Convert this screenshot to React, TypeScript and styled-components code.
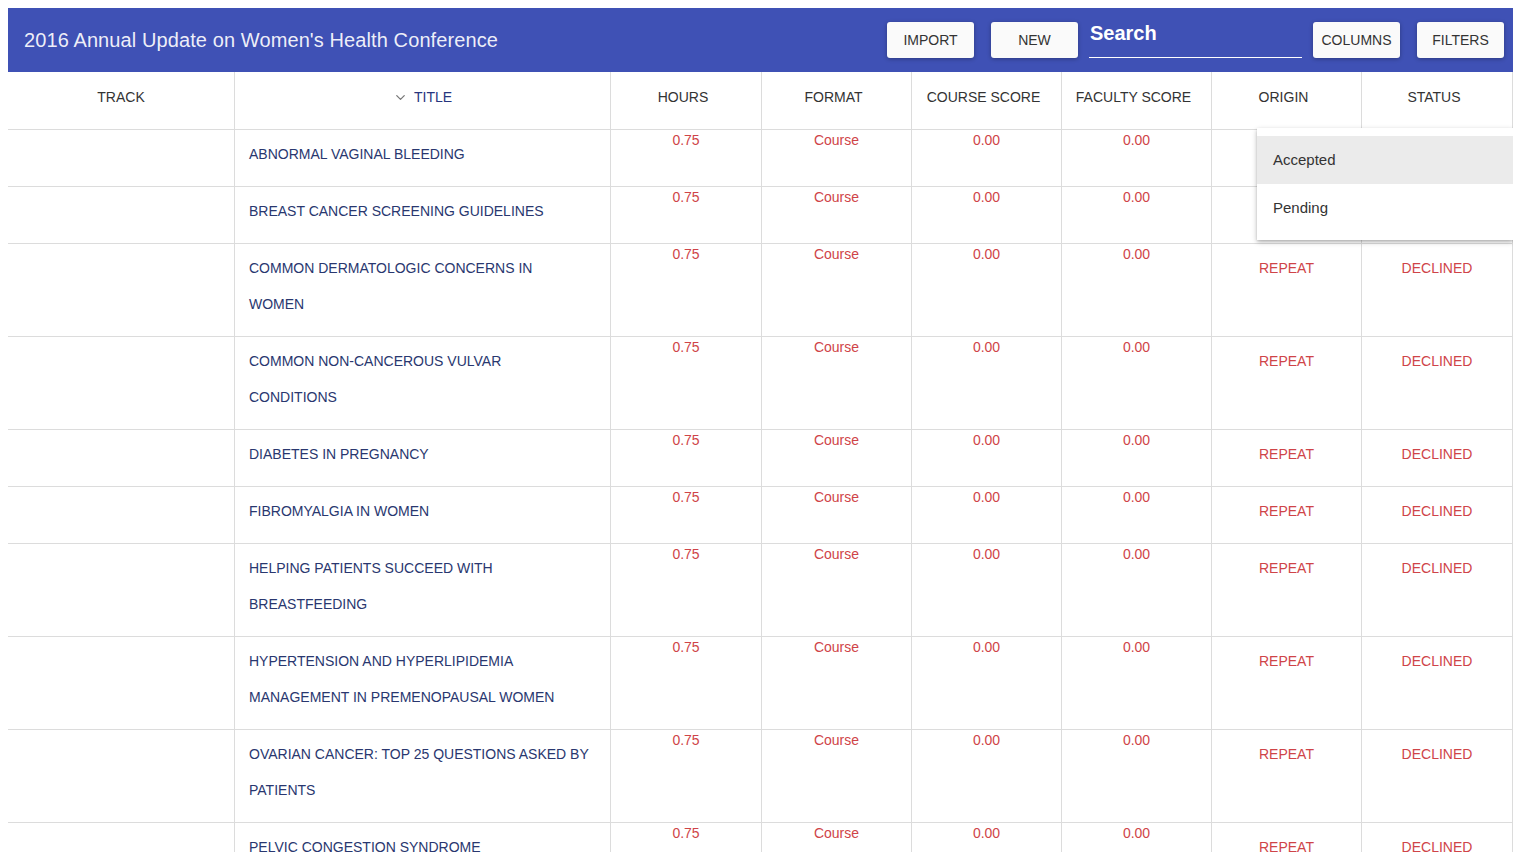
import React from "react";
import styled, { createGlobalStyle } from "styled-components";
import { ChevronDown } from "lucide-react";

const Global = createGlobalStyle`
  body { margin: 8px; font-family: "Liberation Sans", Arial, sans-serif; background: #fff; }
  * { box-sizing: border-box; }
`;

const Page = styled.div`
  height: 844px;
  overflow: hidden;
  position: relative;
`;

const Toolbar = styled.div`
  height: 64px;
  background: #3f51b5;
  display: flex;
  align-items: center;
  padding: 0 9px 0 16px;
  position: relative;
  z-index: 2;
`;

const Heading = styled.div`
  flex: 1;
  color: rgba(255, 255, 255, 0.92);
  font-size: 20px;
  letter-spacing: 0.1px;
`;

const Actions = styled.div`
  display: flex;
  align-items: center;
  gap: 17px;
`;

const Group = styled.div`
  display: flex;
  align-items: center;
  gap: 11px;
`;

const Button = styled.button`
  width: 87px;
  height: 36px;
  border: none;
  border-radius: 3px;
  background: #fafafa;
  color: #333;
  font-family: "Liberation Sans", Arial, sans-serif;
  font-size: 14px;
  text-transform: uppercase;
  box-shadow: 0 1px 4px rgba(0, 0, 0, 0.3);
  margin-bottom: 1px;
`;

const SearchBox = styled.div`
  width: 213px;
  height: 43px;
  border-bottom: 1px solid #fff;
  margin-top: -7px;
  display: flex;
  align-items: flex-start;
  padding-left: 1px;
`;

const SearchLabel = styled.span`
  color: #fff;
  font-weight: bold;
  font-size: 20px;
  line-height: 36px;
`;

const Card = styled.div`
  box-shadow: 0 1px 6px rgba(0, 0, 0, 0.18), 0 1px 3px rgba(0, 0, 0, 0.12);
  background: #fff;
  position: relative;
`;

const cols = "227px 376px 151px 150px 150px 150px 150px 151px";

const Row = styled.div`
  display: grid;
  grid-template-columns: ${cols};
  border-bottom: 1px solid #dcdcdc;
`;

const HeadCell = styled.div<{ $active?: boolean; $sortable?: boolean }>`
  height: 57px;
  border-right: 1px solid #dcdcdc;
  display: flex;
  align-items: center;
  justify-content: center;
  gap: 6px;
  font-size: 14px;
  color: ${(p) => (p.$active ? "#27357e" : "#333")};
  padding-bottom: 7px;
  padding-right: ${(p) => (p.$sortable ? "6px" : "0")};
`;

const Cell = styled.div`
  border-right: 1px solid #dcdcdc;
  font-size: 14px;
`;

const TitleCell = styled(Cell)`
  padding: 6px 12px 14px 14px;
  line-height: 36px;
  color: #29376f;
  text-transform: uppercase;
`;

const NumCell = styled(Cell)`
  padding-top: 2px;
  line-height: 16px;
  text-align: center;
  color: #cf4448;
`;

const TagCell = styled(Cell)`
  padding-top: 6px;
  line-height: 36px;
  text-align: center;
  color: #cf4448;
`;

const Menu = styled.div`
  position: absolute;
  top: 56px;
  right: 0;
  width: 256px;
  padding: 8px 0;
  background: #fff;
  box-shadow: 0 2px 5px rgba(0, 0, 0, 0.28), 0 1px 2px rgba(0, 0, 0, 0.1);
  z-index: 3;
`;

const MenuItem = styled.div<{ $hover?: boolean }>`
  height: 48px;
  line-height: 48px;
  padding-left: 16px;
  font-size: 15px;
  color: #333;
  background: ${(p) => (p.$hover ? "#ebebeb" : "transparent")};
`;

const headers = ["Track", "Title", "Hours", "Format", "Course Score", "Faculty Score", "Origin", "Status"];

const titles = [
  ["Abnormal Vaginal Bleeding"],
  ["Breast Cancer Screening Guidelines"],
  ["Common Dermatologic Concerns in", "Women"],
  ["Common Non-Cancerous Vulvar", "Conditions"],
  ["Diabetes in Pregnancy"],
  ["Fibromyalgia in Women"],
  ["Helping Patients Succeed with", "Breastfeeding"],
  ["Hypertension and Hyperlipidemia", "Management in Premenopausal Women"],
  ["Ovarian Cancer: Top 25 Questions Asked by", "Patients"],
  ["Pelvic Congestion Syndrome"],
];

export default function App() {
  return (
    <Page>
      <Global />
      <Toolbar>
        <Heading>2016 Annual Update on Women's Health Conference</Heading>
        <Actions>
          <Button>Import</Button>
          <Group>
            <Button>New</Button>
            <SearchBox>
              <SearchLabel>Search</SearchLabel>
            </SearchBox>
            <Button>Columns</Button>
          </Group>
          <Button>Filters</Button>
        </Actions>
      </Toolbar>
      <Card>
        <Row>
          {headers.map((h, i) => (
            <HeadCell key={h} $active={h === "Title"} $sortable={i > 1}>
              {h === "Title" && <ChevronDown size={15} color="#777" strokeWidth={2} />}
              {h.toUpperCase()}
            </HeadCell>
          ))}
        </Row>
        {titles.map((t, i) => (
          <Row key={i}>
            <Cell />
            <TitleCell>
              {t.map((line, j) => (
                <div key={j}>{line}</div>
              ))}
            </TitleCell>
            <NumCell>0.75</NumCell>
            <NumCell>Course</NumCell>
            <NumCell>0.00</NumCell>
            <NumCell>0.00</NumCell>
            <TagCell>{i > 1 ? "REPEAT" : ""}</TagCell>
            <TagCell>{i > 1 ? "DECLINED" : ""}</TagCell>
          </Row>
        ))}
        <Menu>
          <MenuItem $hover>Accepted</MenuItem>
          <MenuItem>Pending</MenuItem>
        </Menu>
      </Card>
    </Page>
  );
}
